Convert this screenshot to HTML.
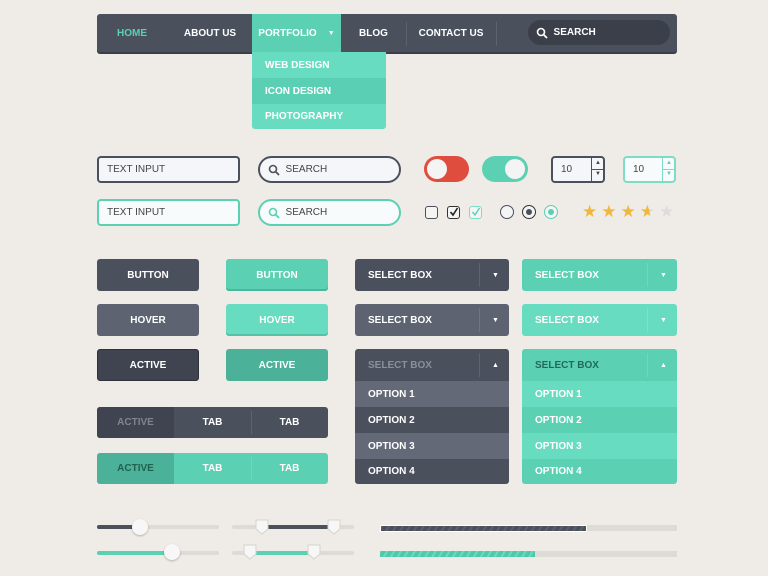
<!DOCTYPE html>
<html><head><meta charset="utf-8"><style>
*{margin:0;padding:0;box-sizing:border-box}
body{width:768px;height:576px;background:#efece7;font-family:"Liberation Sans",sans-serif;position:relative;overflow:hidden}
.a{position:absolute}
.t{font-size:10px;font-weight:bold;color:#fff;letter-spacing:0}
.c{display:flex;align-items:center;justify-content:center}
.l{display:flex;align-items:center;padding-left:13px}
.dk{background:#4b505d}
.tl{background:#5bd0b2}
.ar{position:absolute;left:126px;top:0;width:29px;height:100%;display:flex;align-items:center;justify-content:center;font-size:7px;color:#fff}
</style></head><body>
<!-- nav -->
<div class="a dk" style="left:97px;top:14px;width:580px;height:38px;border-radius:3px;box-shadow:0 2px 0 #3a3e48"></div>
<div class="a t c" style="left:97px;top:14px;width:70px;height:38px;color:#5bd0b2">HOME</div>
<div class="a t c" style="left:172px;top:14px;width:76px;height:38px">ABOUT US</div>
<div class="a tl t c" style="left:252px;top:14px;width:89px;height:38px">PORTFOLIO&nbsp;&nbsp;&nbsp;&nbsp;<span style="font-size:7px">▼</span></div>
<div class="a t c" style="left:341px;top:14px;width:65px;height:38px">BLOG</div>
<div class="a" style="left:406px;top:22px;width:1px;height:24px;background:#5d6270"></div>
<div class="a t c" style="left:406px;top:14px;width:90px;height:38px">CONTACT US</div>
<div class="a" style="left:496px;top:22px;width:1px;height:24px;background:#5d6270"></div>
<div class="a t" style="left:528px;top:20px;width:142px;height:25px;border-radius:13px;background:#3b3f4a;display:flex;align-items:center;padding-left:8px">
<svg width="12" height="12" viewBox="0 0 12 12"><circle cx="5" cy="5" r="3.5" fill="none" stroke="#fff" stroke-width="1.6"/><path d="M7.5 7.5L11 11" stroke="#fff" stroke-width="1.8"/></svg>&nbsp;&nbsp;SEARCH</div>
<!-- dropdown -->
<div class="a t l" style="left:252px;top:52px;width:134px;height:26px;background:#67dcc0">WEB DESIGN</div>
<div class="a t l" style="left:252px;top:78px;width:134px;height:26px;background:#5bcfb3">ICON DESIGN</div>
<div class="a t l" style="left:252px;top:104px;width:134px;height:25px;background:#67dcc0;border-radius:0 0 3px 3px">PHOTOGRAPHY</div>
<!-- inputs -->
<div class="a l" style="left:97px;top:156px;width:143px;height:27px;border:2px solid #4b505d;border-radius:4px;background:#f4f6f9;font-size:10px;color:#444;padding-left:8px">TEXT INPUT</div>
<div class="a l" style="left:97px;top:199px;width:143px;height:27px;border:2px solid #5bd0b2;border-radius:4px;background:#f7fbfb;font-size:10px;color:#444;padding-left:8px">TEXT INPUT</div>
<div class="a l" style="left:258px;top:156px;width:143px;height:27px;border:2px solid #4b505d;border-radius:14px;background:#f4f6f9;font-size:10px;color:#444;padding-left:8px"><svg width="12" height="12" viewBox="0 0 12 12"><circle cx="5" cy="5" r="3.5" fill="none" stroke="#4b505d" stroke-width="1.6"/><path d="M7.5 7.5L11 11" stroke="#4b505d" stroke-width="1.8"/></svg>&nbsp;&nbsp;SEARCH</div>
<div class="a l" style="left:258px;top:199px;width:143px;height:27px;border:2px solid #5bd0b2;border-radius:14px;background:#f7fbfb;font-size:10px;color:#444;padding-left:8px"><svg width="12" height="12" viewBox="0 0 12 12"><circle cx="5" cy="5" r="3.5" fill="none" stroke="#5bd0b2" stroke-width="1.6"/><path d="M7.5 7.5L11 11" stroke="#5bd0b2" stroke-width="1.8"/></svg>&nbsp;&nbsp;SEARCH</div>
<!-- toggles -->
<div class="a" style="left:424px;top:156px;width:45px;height:26px;border-radius:13px;background:#df4d3f"><div class="a" style="left:3px;top:3px;width:20px;height:20px;border-radius:50%;background:#f4f4f4"></div></div>
<div class="a" style="left:482px;top:156px;width:46px;height:26px;border-radius:13px;background:#5bd0b2"><div class="a" style="left:23px;top:3px;width:20px;height:20px;border-radius:50%;background:#f4f4f4"></div></div>
<!-- spinners -->
<div class="a" style="left:551px;top:156px;width:54px;height:27px;border:2px solid #4b505d;border-radius:4px;background:#f4f6f9;font-size:10px;color:#444;padding:6px 0 0 8px">10
<div class="a" style="left:38px;top:0;width:1px;height:23px;background:#4b505d"></div><div class="a" style="left:38px;top:11px;width:14px;height:1px;background:#4b505d"></div>
<div class="a" style="left:42px;top:2px;font-size:6px">▲</div><div class="a" style="left:42px;top:13px;font-size:6px">▼</div></div>
<div class="a" style="left:623px;top:156px;width:53px;height:27px;border:2px solid #7ddcc4;border-radius:4px;background:#f7fbfb;font-size:10px;color:#444;padding:6px 0 0 8px">10
<div class="a" style="left:37px;top:0;width:1px;height:23px;background:#7ddcc4"></div><div class="a" style="left:37px;top:11px;width:14px;height:1px;background:#7ddcc4"></div>
<div class="a" style="left:41px;top:2px;font-size:6px;color:#5bd0b2">▲</div><div class="a" style="left:41px;top:13px;font-size:6px;color:#5bd0b2">▼</div></div>
<!-- checks -->
<div class="a" style="left:425px;top:206px;width:13px;height:13px;border:1.5px solid #4b505d;border-radius:3px;background:#f4f4f4"></div>
<div class="a" style="left:447px;top:206px;width:13px;height:13px;border:1.5px solid #333;border-radius:3px;background:#f4f4f4"><svg class="a" style="left:1px;top:0" width="10" height="10"><path d="M1.5 5L4 8L8.5 1" fill="none" stroke="#222" stroke-width="1.6"/></svg></div>
<div class="a" style="left:469px;top:206px;width:13px;height:13px;border:1.5px solid #7ddcc4;border-radius:3px;background:#f4f4f4"><svg class="a" style="left:1px;top:0" width="10" height="10"><path d="M1.5 5L4 8L8.5 1" fill="none" stroke="#5bd0b2" stroke-width="1.4"/></svg></div>
<div class="a" style="left:500px;top:205px;width:14px;height:14px;border:1.5px solid #4b505d;border-radius:50%;background:#f4f4f4"></div>
<div class="a" style="left:522px;top:205px;width:14px;height:14px;border:1.5px solid #333;border-radius:50%;background:#f4f4f4"><div class="a" style="left:2.5px;top:2.5px;width:6px;height:6px;border-radius:50%;background:#4b505d"></div></div>
<div class="a" style="left:544px;top:205px;width:14px;height:14px;border:1.5px solid #5bd0b2;border-radius:50%;background:#f4f4f4"><div class="a" style="left:2.5px;top:2.5px;width:6px;height:6px;border-radius:50%;background:#5bd0b2"></div></div>
<!-- stars -->
<div class="a" style="left:582px;top:202px;font-size:17px;color:#f0b73a;letter-spacing:4px;font-family:'DejaVu Sans'">★★★<span style="background:linear-gradient(90deg,#f0b73a 50%,#ddd 50%);-webkit-background-clip:text;color:transparent">★</span><span style="color:#ddd">★</span></div>
<!-- buttons -->
<div class="a t c dk" style="left:97px;top:259px;width:102px;height:32px;border-radius:3px">BUTTON</div>
<div class="a t c" style="left:97px;top:304px;width:102px;height:32px;border-radius:3px;background:#5d6370">HOVER</div>
<div class="a t c" style="left:97px;top:349px;width:102px;height:32px;border-radius:3px;background:#3f4450;border:1px solid #2e323b">ACTIVE</div>
<div class="a t c tl" style="left:226px;top:259px;width:102px;height:32px;border-radius:3px;box-shadow:inset 0 -2px 0 #49b79b">BUTTON</div>
<div class="a t c" style="left:226px;top:304px;width:102px;height:32px;border-radius:3px;background:#68dcc0;box-shadow:inset 0 -2px 0 #55c2a7">HOVER</div>
<div class="a t c" style="left:226px;top:349px;width:102px;height:32px;border-radius:3px;background:#4bb198">ACTIVE</div>
<!-- selects -->
<div class="a t l dk" style="left:355px;top:259px;width:154px;height:32px;border-radius:3px">SELECT BOX<div class="a" style="left:124px;top:4px;width:1px;height:24px;background:#5e6370"></div><span class="ar">▼</span></div>
<div class="a t l" style="left:355px;top:304px;width:154px;height:32px;border-radius:3px;background:#5d6370">SELECT BOX<div class="a" style="left:124px;top:4px;width:1px;height:24px;background:#6f7582"></div><span class="ar">▼</span></div>
<div class="a" style="left:355px;top:349px;width:154px;height:135px;border-radius:3px;overflow:hidden">
<div class="a t l" style="left:0;top:0;width:154px;height:32px;background:#4b505d;color:#8b909b">SELECT BOX<div class="a" style="left:124px;top:4px;width:1px;height:24px;background:#5e6370"></div><span class="ar">▲</span></div>
<div class="a t l" style="left:0;top:32px;width:154px;height:26px;background:#636976">OPTION 1</div>
<div class="a t l" style="left:0;top:58px;width:154px;height:26px;background:#4b505d">OPTION 2</div>
<div class="a t l" style="left:0;top:84px;width:154px;height:26px;background:#636976">OPTION 3</div>
<div class="a t l" style="left:0;top:110px;width:154px;height:25px;background:#4b505d">OPTION 4</div></div>
<div class="a t l tl" style="left:522px;top:259px;width:155px;height:32px;border-radius:3px">SELECT BOX<div class="a" style="left:125px;top:4px;width:1px;height:24px;background:#6ad9bd"></div><span class="ar" style="left:127px">▼</span></div>
<div class="a t l" style="left:522px;top:304px;width:155px;height:32px;border-radius:3px;background:#68dcc0">SELECT BOX<div class="a" style="left:125px;top:4px;width:1px;height:24px;background:#7ae3ca"></div><span class="ar" style="left:127px">▼</span></div>
<div class="a" style="left:522px;top:349px;width:155px;height:135px;border-radius:3px;overflow:hidden">
<div class="a t l" style="left:0;top:0;width:155px;height:32px;background:#5bd0b2;color:#1f6b58">SELECT BOX<div class="a" style="left:125px;top:4px;width:1px;height:24px;background:#6ad9bd"></div><span class="ar" style="left:127px">▲</span></div>
<div class="a t l" style="left:0;top:32px;width:155px;height:26px;background:#68dcc0">OPTION 1</div>
<div class="a t l" style="left:0;top:58px;width:155px;height:26px;background:#5bd0b2">OPTION 2</div>
<div class="a t l" style="left:0;top:84px;width:155px;height:26px;background:#68dcc0">OPTION 3</div>
<div class="a t l" style="left:0;top:110px;width:155px;height:25px;background:#5bd0b2">OPTION 4</div></div>
<!-- tabs -->
<div class="a" style="left:97px;top:407px;width:231px;height:31px;border-radius:3px;overflow:hidden;background:#4b505d">
<div class="a t c" style="left:0;top:0;width:77px;height:31px;background:#3f4450;color:#7f8490">ACTIVE</div>
<div class="a t c" style="left:77px;top:0;width:77px;height:31px">TAB</div>
<div class="a" style="left:154px;top:4px;width:1px;height:23px;background:#5e6370"></div>
<div class="a t c" style="left:154px;top:0;width:77px;height:31px">TAB</div></div>
<div class="a" style="left:97px;top:453px;width:231px;height:31px;border-radius:3px;overflow:hidden;background:#5bd0b2">
<div class="a t c" style="left:0;top:0;width:77px;height:31px;background:#4bb198;color:#20614f">ACTIVE</div>
<div class="a t c" style="left:77px;top:0;width:77px;height:31px">TAB</div>
<div class="a" style="left:154px;top:4px;width:1px;height:23px;background:#6ad9bd"></div>
<div class="a t c" style="left:154px;top:0;width:77px;height:31px">TAB</div></div>
<!-- sliders -->
<div class="a" style="left:97px;top:525px;width:122px;height:4px;border-radius:2px;background:#dddbd5"></div>
<div class="a" style="left:97px;top:525px;width:43px;height:4px;border-radius:2px;background:#4b505d"></div>
<div class="a" style="left:132px;top:519px;width:16px;height:16px;border-radius:50%;background:#f7f7f7;box-shadow:0 1px 2px rgba(0,0,0,.25)"></div>
<div class="a" style="left:97px;top:551px;width:122px;height:4px;border-radius:2px;background:#dddbd5"></div>
<div class="a" style="left:97px;top:551px;width:75px;height:4px;border-radius:2px;background:#5bd0b2"></div>
<div class="a" style="left:164px;top:544px;width:16px;height:16px;border-radius:50%;background:#f7f7f7;box-shadow:0 1px 2px rgba(0,0,0,.25)"></div>
<div class="a" style="left:232px;top:525px;width:122px;height:4px;border-radius:2px;background:#dddbd5"></div>
<div class="a" style="left:262px;top:525px;width:72px;height:4px;background:#4b505d"></div>
<svg class="a" style="left:255px;top:519px" width="14" height="16"><path d="M1 1H13V10L7 15L1 10Z" fill="#f7f7f7" stroke="#d5d3ce"/></svg>
<svg class="a" style="left:327px;top:519px" width="14" height="16"><path d="M1 1H13V10L7 15L1 10Z" fill="#f7f7f7" stroke="#d5d3ce"/></svg>
<div class="a" style="left:232px;top:551px;width:122px;height:4px;border-radius:2px;background:#dddbd5"></div>
<div class="a" style="left:250px;top:551px;width:64px;height:4px;background:#5bd0b2"></div>
<svg class="a" style="left:243px;top:544px" width="14" height="16"><path d="M1 1H13V10L7 15L1 10Z" fill="#f7f7f7" stroke="#d5d3ce"/></svg>
<svg class="a" style="left:307px;top:544px" width="14" height="16"><path d="M1 1H13V10L7 15L1 10Z" fill="#f7f7f7" stroke="#d5d3ce"/></svg>
<!-- progress -->
<div class="a" style="left:380px;top:525px;width:297px;height:6px;background:#dddbd5"></div>
<div class="a" style="left:380px;top:525px;width:207px;height:7px;background:repeating-linear-gradient(-60deg,#4b505d 0 4px,#5a606c 4px 6px);border:1px solid #fff"></div>
<div class="a" style="left:380px;top:551px;width:297px;height:6px;background:#dddbd5"></div>
<div class="a" style="left:380px;top:551px;width:155px;height:6px;background:repeating-linear-gradient(-60deg,#4fc9aa 0 4px,#6ad9bd 4px 6px)"></div>
</body></html>
